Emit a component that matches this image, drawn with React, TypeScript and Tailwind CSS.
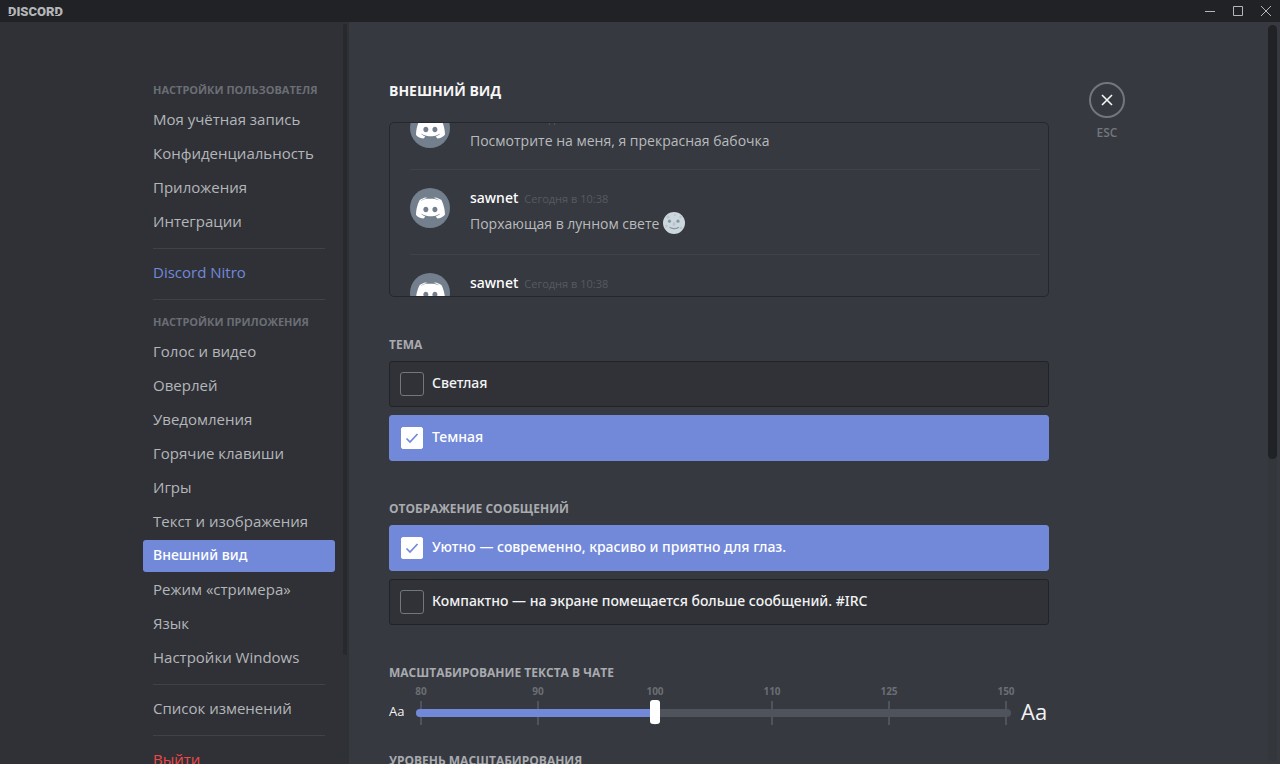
import { useState } from "react";
import type { ReactNode } from "react";

type Message = { id: number; time: string; body?: ReactNode };

function Clyde() {
  return (
    <span className="flex size-10 shrink-0 items-center justify-center rounded-full bg-[#747f8d]">
      <svg viewBox="0 17 146 109" className="w-[29px] text-white" aria-hidden="true">
        <path
          fill="currentColor"
          fillRule="evenodd"
          d="M107.75 125.001s-4.5-5.375-8.25-10.125c16.375-4.625 22.625-14.875 22.625-14.875-5.125 3.375-10 5.75-14.375 7.375-6.25 2.625-12.25 4.375-18.125 5.375-12 2.25-23 1.625-32.375-.125-7.125-1.375-13.25-3.375-18.375-5.375-2.875-1.125-6-2.5-9.125-4.25-.375-.25-.75-.375-1.125-.625-.25-.125-.375-.25-.5-.375-2.25-1.25-3.5-2.125-3.5-2.125s6 10 21.875 14.75c-3.75 4.75-8.375 10.375-8.375 10.375-27.625-.875-38.125-19-38.125-19 0-40.25 18-72.875 18-72.875 18-13.5 35.125-13.125 35.125-13.125l1.25 1.5c-22.5 6.5-32.875 16.375-32.875 16.375s2.75-1.5 7.375-3.625c13.375-5.875 24-7.5 28.375-7.875.75-.125 1.375-.25 2.125-.25 7.625-1 16.25-1.250 25.25-.25 11.875 1.375 24.625 4.375 37.625 11.5 0 0-9.875-9.375-31.125-15.875l1.75-2s17.125-.375 35.125 13.125c0 0 18 32.625 18 72.875 0 0-10.625 18.625-38.25 19.5zM49.625 66.625c-7.125 0-12.75 6.25-12.75 13.875s5.75 13.875 12.75 13.875c7.125 0 12.75-6.25 12.75-13.875.125-7.625-5.625-13.875-12.75-13.875zm45.625 0c-7.125 0-12.75 6.25-12.75 13.875s5.75 13.875 12.75 13.875c7.125 0 12.75-6.25 12.75-13.875s-5.625-13.875-12.75-13.875z"
        />
      </svg>
    </span>
  );
}

function MoonFace() {
  return (
    <svg viewBox="0 0 22 22" className="mt-0.5 mb-[3px] size-[22px] shrink-0" role="img" aria-label="Луна">
      <circle cx="11" cy="11" r="11" fill="#ccd6dd" />
      <circle cx="5" cy="5" r="1.500" fill="#b8c5cd" />
      <circle cx="12" cy="3" r="1" fill="#b8c5cd" />
      <circle cx="17.500" cy="5" r="1.200" fill="#b8c5cd" />
      <circle cx="3.500" cy="14" r="1.300" fill="#b8c5cd" />
      <circle cx="18" cy="16" r="1.200" fill="#b8c5cd" />
      <ellipse cx="11" cy="12" rx="1.500" ry="2" fill="#b8c5cd" />
      <circle cx="6.500" cy="9.200" r="1.600" fill="#8496a3" />
      <circle cx="15" cy="9.200" r="1.600" fill="#8496a3" />
      <path d="M7 15.500c2.500 1.400 6 1.400 8.500 0" fill="none" stroke="#8899a6" strokeWidth="1.300" strokeLinecap="round" />
    </svg>
  );
}

const messages: Message[] = [
  { id: 1, time: "Сегодня в 10:38", body: "Посмотрите на меня, я прекрасная бабочка" },
  {
    id: 2,
    time: "Сегодня в 10:38",
    body: (
      <>
        Порхающая в лунном свете <MoonFace />
      </>
    ),
  },
  { id: 3, time: "Сегодня в 10:38" },
];

function NavHeader({ children }: { children: ReactNode }) {
  return (
    <h2 className="px-2.5 py-1.5 text-[11px] leading-4 font-bold whitespace-nowrap text-[#6b6e75] uppercase">
      {children}
    </h2>
  );
}

function NavItem({ label, tone = "text-[#b4b6ba]", active = false }: { label: string; tone?: string; active?: boolean }) {
  return (
    <a
      href="#"
      aria-current={active ? "page" : undefined}
      className={`mb-0.5 rounded-[3px] px-2.5 pt-[5px] pb-[7px] leading-5 whitespace-nowrap ${
        active ? "bg-[#7289da] font-['Noto_Sans',sans-serif] text-sm font-medium text-white" : `text-[15px] ${tone}`
      }`}
    >
      {label}
    </a>
  );
}

function NavSeparator() {
  return <hr className="mx-2.5 my-2 border-0 border-t border-[#3f4247]" />;
}

function SectionTitle({ children, id }: { children: ReactNode; id?: string }) {
  return (
    <h3 id={id} className="text-xs leading-4 font-bold text-[#a9abb0] uppercase">
      {children}
    </h3>
  );
}

function Option({ name, label, checked, onSelect }: { name: string; label: string; checked: boolean; onSelect: () => void }) {
  return (
    <label
      className={`flex items-center gap-2 rounded-[3px] border px-2.5 py-2.5 font-['Noto_Sans',sans-serif] text-sm leading-[22px] font-medium ${
        checked ? "border-[#7289da] bg-[#7289da] text-white" : "border-[#212327] bg-[#303237] text-[#f2f2f3]"
      }`}
    >
      <span className="grid size-6 shrink-0 place-items-center">
        <input
          type="radio"
          name={name}
          checked={checked}
          onChange={onSelect}
          className="col-start-1 row-start-1 size-6 appearance-none rounded-[3px] border border-[#72767d] checked:size-[22px] checked:rounded-xs checked:border-white checked:bg-white"
        />
        {checked && (
          <svg viewBox="0 0 18 18" className="pointer-events-none col-start-1 row-start-1 size-[18px]" aria-hidden="true">
            <path d="M3.500 9.500l3.500 3.500 7.500-8" fill="none" stroke="#7289da" strokeWidth="1.700" />
          </svg>
        )}
      </span>
      <span className="pb-0.5">{label}</span>
    </label>
  );
}

const scale = [80, 90, 100, 110, 125, 150];

function FontScale() {
  const [step, setStep] = useState(2);
  const fill = `${(step / (scale.length - 1)) * 100}%`;
  return (
    <div className="flex gap-2.5 text-[#f2f2f3]">
      <span className="mt-[18px] w-[17px] text-[13px] leading-4">Aa</span>
      <div className="relative h-[46px] flex-1">
        <div className="flex justify-between px-[5px] text-[10px] leading-3 font-bold text-[#6b6e75]">
          {scale.map((n) => (
            <span key={n} className="flex w-0 flex-col items-center gap-1">
              {n}
              <span className="h-6 w-0.5 shrink-0 bg-[#4f545c]" />
            </span>
          ))}
        </div>
        <div className="absolute inset-x-0 top-6 h-2 rounded-full bg-[#4f545c]">
          <div className="h-2 rounded-full bg-[#7289da]" style={{ width: fill }} />
        </div>
        <input
          type="range"
          min={0}
          max={5}
          value={step}
          onChange={(e) => setStep(Number(e.target.value))}
          aria-labelledby="font-scale"
          className="absolute inset-x-0 top-[15px] h-6 w-full appearance-none bg-transparent [&::-webkit-slider-thumb]:h-6 [&::-webkit-slider-thumb]:w-2.5 [&::-webkit-slider-thumb]:appearance-none [&::-webkit-slider-thumb]:rounded-[3px] [&::-webkit-slider-thumb]:bg-white"
        />
      </div>
      <span className="mt-2.5 w-7 text-[22px] leading-8">Aa</span>
    </div>
  );
}

function NotchedD() {
  return (
    <span className="relative">
      D
      <span className="absolute bottom-1 left-0 h-px w-1 bg-[#202225]" />
    </span>
  );
}

function TitleBar() {
  return (
    <header className="flex h-[22px] shrink-0 items-center justify-between bg-[#202225] pl-2 text-[#b4b6ba]">
      <span className="pt-0.5 font-[Roboto] text-[13px] leading-4 font-black">
        <NotchedD />
        ISCOR
        <NotchedD />
      </span>
      <div className="flex">
        <button aria-label="Свернуть" className="grid h-[22px] w-7 place-items-center">
          <svg viewBox="0 0 12 12" className="size-3" fill="none" stroke="currentColor"><path d="M1 6.500h10" /></svg>
        </button>
        <button aria-label="Развернуть" className="grid h-[22px] w-7 place-items-center">
          <svg viewBox="0 0 12 12" className="size-3" fill="none" stroke="currentColor"><path d="M1.500 1.500h9v9h-9z" /></svg>
        </button>
        <button aria-label="Закрыть" className="grid h-[22px] w-7 place-items-center">
          <svg viewBox="0 0 12 12" className="size-3" fill="none" stroke="currentColor"><path d="M1 1l10 10M11 1L1 11" /></svg>
        </button>
      </div>
    </header>
  );
}

export default function App() {
  const [theme, setTheme] = useState("dark");
  const [display, setDisplay] = useState("cozy");
  return (
    <div className="flex h-screen flex-col overflow-hidden bg-[#36393f] font-['Open_Sans','Noto_Sans',sans-serif]">
      <TitleBar />
      <div className="flex min-h-0 flex-1">
        <aside className="flex shrink-0 grow basis-[218px] justify-end overflow-hidden bg-[#2f3136]">
          <nav className="mr-2 flex w-48 flex-col pt-[54px]">
            <NavHeader>Настройки пользователя</NavHeader>
            <NavItem label="Моя учётная запись" />
            <NavItem label="Конфиденциальность" />
            <NavItem label="Приложения" />
            <NavItem label="Интеграции" />
            <NavSeparator />
            <NavItem label="Discord Nitro" tone="text-[#7289da]" />
            <NavSeparator />
            <NavHeader>Настройки приложения</NavHeader>
            <NavItem label="Голос и видео" />
            <NavItem label="Оверлей" />
            <NavItem label="Уведомления" />
            <NavItem label="Горячие клавиши" />
            <NavItem label="Игры" />
            <NavItem label="Текст и изображения" />
            <NavItem label="Внешний вид" active />
            <NavItem label="Режим «стримера»" />
            <NavItem label="Язык" />
            <NavItem label="Настройки Windows" />
            <NavSeparator />
            <NavItem label="Список изменений" />
            <NavSeparator />
            <NavItem label="Выйти" tone="text-[#f04747]" />
          </nav>
          <div className="mt-0.5 mr-0.5 h-[85%] w-1 rounded-full bg-[#27292d]" />
        </aside>

        <div className="flex min-w-0 grow basis-[800px] overflow-hidden">
          <main className="max-w-[740px] min-w-0 flex-1 px-10 pt-[59px]">
            <h1 className="text-sm leading-5 font-bold text-[#f6f6f7] uppercase">Внешний вид</h1>

            <div className="mt-[21px] h-[175px] overflow-hidden rounded-[5px] border border-[#25272b] bg-[#36393f]">
              <ul className="-mt-[33px] mr-2 ml-5">
                {messages.map((m) => (
                  <li key={m.id} className="flex gap-5 border-b border-[#3f4248] pt-[18px] pb-[17px]">
                    <Clyde />
                    <div className="min-w-0">
                      <div className="flex h-5 items-baseline gap-1.5 leading-5">
                        <span className="font-['Noto_Sans',sans-serif] text-sm leading-5 font-medium text-white">sawnet</span>
                        <time className="text-[11px] leading-5 text-[#565a61]">{m.time}</time>
                      </div>
                      {m.body && (
                        <p className="mt-0.5 flex items-center gap-1 text-sm leading-[22px] whitespace-nowrap text-[#b9bbbe]">{m.body}</p>
                      )}
                    </div>
                  </li>
                ))}
              </ul>
            </div>

            <section className="mt-10">
              <SectionTitle>Тема</SectionTitle>
              <div className="mt-2 flex flex-col gap-2">
                <Option name="theme" label="Светлая" checked={theme === "light"} onSelect={() => setTheme("light")} />
                <Option name="theme" label="Темная" checked={theme === "dark"} onSelect={() => setTheme("dark")} />
              </div>
            </section>

            <section className="mt-10">
              <SectionTitle>Отображение сообщений</SectionTitle>
              <div className="mt-2 flex flex-col gap-2">
                <Option name="display" label="Уютно — современно, красиво и приятно для глаз." checked={display === "cozy"} onSelect={() => setDisplay("cozy")} />
                <Option name="display" label="Компактно — на экране помещается больше сообщений. #IRC" checked={display === "compact"} onSelect={() => setDisplay("compact")} />
              </div>
            </section>

            <section className="mt-10">
              <SectionTitle id="font-scale">Масштабирование текста в чате</SectionTitle>
              <div className="mt-1">
                <FontScale />
              </div>
            </section>

            <section className="mt-[22px]">
              <SectionTitle>Уровень масштабирования</SectionTitle>
            </section>
          </main>
          <div className="flex w-9 flex-col items-center gap-[7px] pt-[60px]">
            <button aria-label="Закрыть настройки" className="grid size-9 shrink-0 place-items-center rounded-full border-2 border-[#72767d] text-[#f6f6f7]">
              <svg viewBox="0 0 12 12" className="size-3" fill="none" stroke="currentColor" strokeWidth="1.600" aria-hidden="true">
                <path d="M1 1l10 10M11 1L1 11" />
              </svg>
            </button>
            <span className="text-xs leading-4 font-semibold text-[#72767d]">ESC</span>
          </div>
          <div className="mt-[3px] mr-[3px] mb-[3px] ml-auto w-[9px] rounded-full bg-[#33363b]">
            <div className="h-[59%] rounded-full bg-[#202225]" />
          </div>
        </div>
      </div>
    </div>
  );
}
